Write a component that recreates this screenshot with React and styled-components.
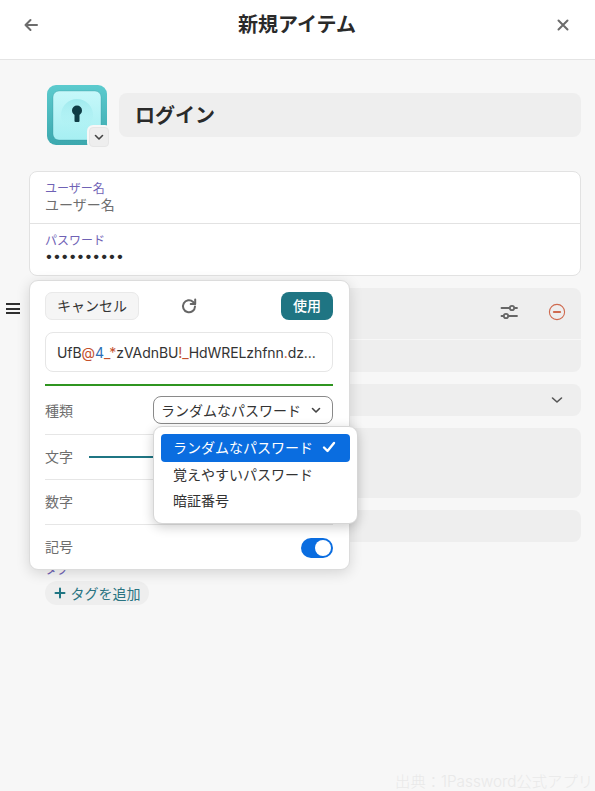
import React from "react";
import styled, { createGlobalStyle } from "styled-components";

const Global = createGlobalStyle`
  html, body { margin: 0; padding: 0; height: 100%; }
  body { background: #f7f7f7; font-family: Inter, "Noto Sans CJK JP", sans-serif; color: #2b2b2b; overflow: hidden; }
  * { box-sizing: border-box; }
`;

const Page = styled.div`
  position: relative;
  width: 595px;
  height: 791px;
  overflow: hidden;
  background: #f7f7f7;
`;
const Header = styled.header`
  height: 60px;
  background: #fff;
  border-bottom: 1px solid #e4e4e4;
  display: flex;
  align-items: center;
  justify-content: space-between;
  padding: 0 25px 10px 24px;
`;
const HeaderIcon = styled.svg`
  width: 14px;
  height: 14px;
  display: block;
  fill: none;
  stroke: #6c6c6c;
  stroke-width: 2;
  stroke-linecap: round;
  stroke-linejoin: round;
`;
const Title = styled.h1`
  margin: 0;
  font-size: 20px;
  line-height: 30px;
  font-weight: 700;
  color: #2a2a2a;
`;
const Main = styled.main`
  padding: 25px 14px 0 29px;
`;
const TitleRow = styled.div`
  display: flex;
  align-items: center;
  gap: 12px;
  padding-left: 18px;
`;
const ItemIcon = styled.div`
  position: relative;
  width: 60px;
  height: 60px;
  flex: none;
`;
const IconChevron = styled.div`
  position: absolute;
  right: -2px;
  bottom: -2px;
  width: 20px;
  height: 20px;
  border-radius: 4px;
  background: #eeeeee;
  border: 1px solid #e6e6e6;
  box-shadow: 0 0 0 2px #f7f7f7;
  display: flex;
  align-items: center;
  justify-content: center;
`;
const TitleField = styled.div`
  flex: 1;
  height: 44px;
  border-radius: 8px;
  background: #eeeeee;
  padding: 0 16px 2px;
  display: flex;
  align-items: center;
  font-size: 20px;
  font-weight: 700;
  color: #2a2a2a;
`;
const Card = styled.section`
  margin-top: 26px;
  background: #fff;
  border: 1px solid #e2e2e2;
  border-radius: 8px;
`;
const Field = styled.div`
  height: 51px;
  padding: 10px 15px 0;
  & + & { border-top: 1px solid #e2e2e2; height: 52px; padding-top: 10px; }
`;
const FieldLabel = styled.div`
  font-size: 12px;
  line-height: 14px;
  color: #6f62b5;
`;
const FieldValue = styled.div`
  font-size: 14px;
  line-height: ${p => (p.$dots ? "16px" : "18px")};
  color: ${p => (p.$placeholder ? "#6e6e6e" : "#2b2b2b")};
`;
const GraySection = styled.section`
  position: relative;
  margin-top: 12px;
  height: ${p => p.$h}px;
  background: #eeeeee;
  border-radius: 8px;
`;
const SectionDivider = styled.div`
  position: absolute;
  top: 51px;
  left: 0;
  right: 0;
  height: 1px;
  background: #f7f7f7;
`;
const SectionIcon = styled.svg`
  position: absolute;
  right: ${p => p.$right}px;
  top: ${p => p.$top}px;
  width: 18px;
  height: 18px;
  fill: none;
  stroke: ${p => p.$color};
  stroke-width: ${p => p.$sw || 1.6};
  stroke-linecap: round;
  stroke-linejoin: round;
`;
const Handle = styled.div`
  position: absolute;
  left: -23px;
  top: 15px;
  width: 14px;
  height: 11px;
  border-top: 2px solid #2f2f2f;
  border-bottom: 2px solid #2f2f2f;
  &::after {
    content: "";
    display: block;
    margin-top: 2.5px;
    height: 2px;
    background: #2f2f2f;
  }
`;
const TagLabel = styled(FieldLabel)`
  margin: 21px 0 0 16px;
`;
const AddTag = styled.div`
  margin: 4px 0 0 16px;
  width: 104px;
  height: 24px;
  border-radius: 12px;
  background: #eeeeee;
  display: flex;
  align-items: center;
  justify-content: center;
  gap: 5px;
  font-size: 14px;
  color: #2a7482;
`;
const Popover = styled.div`
  position: absolute;
  left: 29px;
  top: 280px;
  width: 321px;
  height: 290px;
  background: #fff;
  border: 1px solid #dcdcdc;
  border-radius: 9px;
  box-shadow: 0 3px 14px rgba(0, 0, 0, 0.14);
  padding: 11px 16px 0 15px;
`;
const PopTop = styled.div`
  display: flex;
  align-items: flex-start;
  height: 29px;
`;
const CancelButton = styled.div`
  width: 94px;
  height: 28px;
  border-radius: 7px;
  background: #f5f5f5;
  border: 1px solid #e9e9e9;
  padding-bottom: 2px;
  display: flex;
  align-items: center;
  justify-content: center;
  font-size: 14px;
  color: #333;
`;
const UseButton = styled.div`
  margin-left: auto;
  width: 52px;
  height: 28px;
  border-radius: 8px;
  background: #1f7583;
  padding-bottom: 2px;
  display: flex;
  align-items: center;
  justify-content: center;
  font-size: 14px;
  font-weight: 500;
  color: #fff;
`;
const RefreshIcon = styled.svg`
  margin: 5px 0 0 41px;
  width: 18px;
  height: 18px;
  fill: none;
  stroke: #666;
  stroke-width: 2;
  stroke-linecap: round;
  stroke-linejoin: round;
`;
const PasswordBox = styled.div`
  margin-top: 11px;
  height: 40px;
  border: 1px solid #e6e6e6;
  border-radius: 8px;
  display: flex;
  align-items: center;
  padding: 0 11px;
  font-size: 14px;
  letter-spacing: -0.07px;
  color: #333;
  white-space: pre;
  overflow: hidden;
`;
const Sym = styled.span`
  color: ${p => (p.$blue ? "#2c6fb5" : "#c4502c")};
`;
const Strength = styled.div`
  margin-top: 12px;
  height: 2px;
  background: #2f9520;
`;
const OptionRow = styled.div`
  height: ${p => p.$h}px;
  display: flex;
  align-items: center;
  gap: 16px;
  font-size: 14px;
  color: #6e6e6e;
  & + & { border-top: 1px solid #e6e6e6; }
`;
const OptionLabel = styled.span`
  padding-bottom: ${p => (p.$lift ? 3 : 0)}px;
`;
const Select = styled.div`
  margin-left: auto;
  width: 180px;
  height: 28px;
  border: 1px solid #8a8a8a;
  border-radius: 8px;
  display: flex;
  align-items: center;
  justify-content: space-between;
  padding: 0 10px 0 7px;
  font-size: 14px;
  color: #333;
`;
const Slider = styled.div`
  width: 140px;
  height: 2px;
  background: #1f7583;
`;
const Toggle = styled.div`
  margin-left: auto;
  width: 32px;
  height: 20px;
  border-radius: 10px;
  background: #0a6de0;
  padding: 2px;
  display: flex;
  justify-content: flex-end;
  &::after {
    content: "";
    width: 16px;
    height: 16px;
    border-radius: 50%;
    background: #fff;
  }
`;
const Dropdown = styled.ul`
  position: absolute;
  left: 152.5px;
  top: 426px;
  width: 205px;
  height: 98px;
  margin: 0;
  padding: 7px;
  list-style: none;
  background: #fff;
  border: 1px solid #d6d6d6;
  border-radius: 9px;
  box-shadow: 0 3px 12px rgba(0, 0, 0, 0.2);
`;
const DropItem = styled.li`
  height: ${p => (p.$selected ? 28 : 26)}px;
  padding: 0 14px 2px 12.5px;
  border-radius: 4px;
  display: flex;
  align-items: center;
  justify-content: space-between;
  font-size: 14px;
  background: ${p => (p.$selected ? "#0a6de0" : "transparent")};
  color: ${p => (p.$selected ? "#fff" : "#333")};
`;
const Watermark = styled.div`
  position: absolute;
  right: 2px;
  bottom: -1px;
  font-size: 15.3px;
  font-weight: 300;
  line-height: 20px;
  color: #e9e9e9;
  white-space: nowrap;
`;

const Chevron = ({ size = 12, color = "#444" }) => (
  <svg width={size} height={size} viewBox="0 0 12 12" fill="none" stroke={color} strokeWidth="1.6" strokeLinecap="round" strokeLinejoin="round">
    <path d="M2.500 4.500 6 8l3.500-3.500" />
  </svg>
);

const LoginIcon = () => (
  <svg width="60" height="60" viewBox="0 0 60 60">
    <defs>
      <linearGradient id="outer" x1="0" y1="0" x2="0" y2="1">
        <stop offset="0" stopColor="#5ccbce" />
        <stop offset="1" stopColor="#3ca8ae" />
      </linearGradient>
      <linearGradient id="inner" x1="0" y1="0" x2="0" y2="1">
        <stop offset="0" stopColor="#c6f8fa" />
        <stop offset="1" stopColor="#a6eff2" />
      </linearGradient>
      <linearGradient id="glow" x1="0" y1="0" x2="0" y2="1">
        <stop offset="0" stopColor="#9feaee" />
        <stop offset="1" stopColor="#b4f3f5" stopOpacity="0" />
      </linearGradient>
    </defs>
    <rect width="60" height="60" rx="9" fill="url(#outer)" />
    <rect x="6" y="6" width="48" height="49" rx="6" fill="url(#inner)" stroke="#2f8f98" strokeOpacity="0.3" />
    <circle cx="30" cy="30" r="16" fill="url(#glow)" />
    <circle cx="30" cy="25.500" r="5" fill="#0f3c45" />
    <rect x="27.500" y="26" width="5" height="11" rx="1" fill="#0f3c45" />
  </svg>
);

export default function App() {
  return (
    <Page>
      <Global />
      <Header>
        <HeaderIcon viewBox="0 0 14 14"><path d="M13 7H1.500M6.500 2 1.500 7l5 5" /></HeaderIcon>
        <Title>新規アイテム</Title>
        <HeaderIcon viewBox="0 0 14 14"><path d="M2.500 2.500l9 9M11.500 2.500l-9 9" /></HeaderIcon>
      </Header>
      <Main>
        <TitleRow>
          <ItemIcon>
            <LoginIcon />
            <IconChevron><Chevron /></IconChevron>
          </ItemIcon>
          <TitleField>ログイン</TitleField>
        </TitleRow>
        <Card>
          <Field>
            <FieldLabel>ユーザー名</FieldLabel>
            <FieldValue $placeholder>ユーザー名</FieldValue>
          </Field>
          <Field>
            <FieldLabel>パスワード</FieldLabel>
            <FieldValue $dots>••••••••••</FieldValue>
          </Field>
        </Card>
        <GraySection $h={84}>
          <Handle />
          <SectionDivider />
          <SectionIcon $right={63} $top={15} $color="#666" $sw={1.8} viewBox="0 0 18 18">
            <path d="M1.500 5H9.500M14.500 5H17M1.500 13H3.500M8.500 13H17" />
            <circle cx="12" cy="5" r="2.200" />
            <circle cx="6" cy="13" r="2.200" />
          </SectionIcon>
          <SectionIcon $right={15} $top={15} $color="#cf6a4f" $sw={1.1} viewBox="0 0 18 18">
            <circle cx="9" cy="9" r="7.600" />
            <path d="M5.800 9h6.400" strokeWidth="1.800" />
          </SectionIcon>
        </GraySection>
        <GraySection $h={32}>
          <SectionIcon $right={15} $top={7} $color="#555" viewBox="0 0 18 18">
            <path d="M4.500 7 9 11l4.500-4" />
          </SectionIcon>
        </GraySection>
        <GraySection $h={70} />
        <GraySection $h={32} />
        <TagLabel>タグ</TagLabel>
        <AddTag>
          <svg width="12" height="12" viewBox="0 0 12 12" fill="none" stroke="#1f7583" strokeWidth="2" strokeLinecap="round">
            <path d="M6 1.500v9M1.500 6h9" />
          </svg>
          タグを追加
        </AddTag>
      </Main>
      <Popover>
        <PopTop>
          <CancelButton>キャンセル</CancelButton>
          <RefreshIcon viewBox="0 0 18 18">
            <path d="M15 9.500a6 6 0 1 1-1.900-4.600L15 7" />
            <path d="M15.200 2.500V7h-4.500" />
          </RefreshIcon>
          <UseButton>使用</UseButton>
        </PopTop>
        <PasswordBox>
          UfB<Sym>@</Sym><Sym $blue>4</Sym><Sym>_*</Sym>zVAdnBU<Sym>!_</Sym>HdWRELzhfnn<Sym>.</Sym>dz...
        </PasswordBox>
        <Strength />
        <OptionRow $h={48}>
          <OptionLabel>種類</OptionLabel>
          <Select>ランダムなパスワード<Chevron /></Select>
        </OptionRow>
        <OptionRow $h={45}><OptionLabel $lift>文字</OptionLabel><Slider /></OptionRow>
        <OptionRow $h={45}><OptionLabel $lift>数字</OptionLabel></OptionRow>
        <OptionRow $h={46}><OptionLabel $lift>記号</OptionLabel><Toggle /></OptionRow>
      </Popover>
      <Dropdown>
        <DropItem $selected>
          ランダムなパスワード
          <svg width="14" height="14" viewBox="0 0 14 14" fill="none" stroke="#fff" strokeWidth="2.400" strokeLinecap="round" strokeLinejoin="round">
            <path d="M2 7.500 5.500 11 12 3" />
          </svg>
        </DropItem>
        <DropItem>覚えやすいパスワード</DropItem>
        <DropItem>暗証番号</DropItem>
      </Dropdown>
      <Watermark>出典：1Password公式アプリ</Watermark>
    </Page>
  );
}
